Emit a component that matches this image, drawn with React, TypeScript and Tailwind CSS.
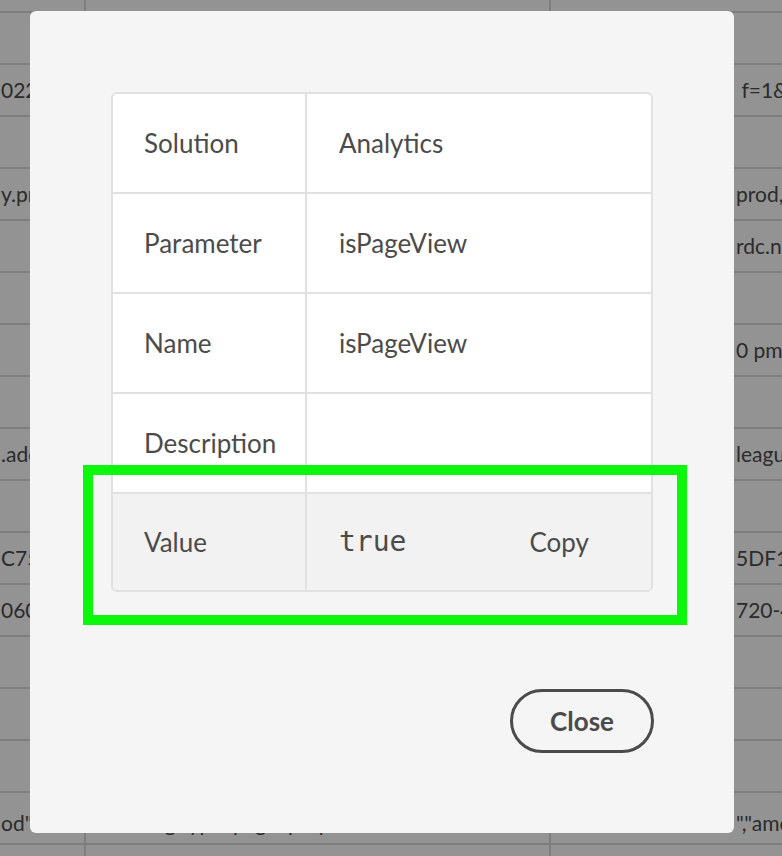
import React from 'react';

// background table rows: [col1, col2, col3]
const bgRows: string[][] = [
  ['ag', 'pa  g                 og', '              p    g'],
  ['', '', ''],
  ['0229', '', ' f=1&t'],
  ['', '', ''],
  ['y.prod', '', 'prod,a'],
  ['', '', 'rdc.ne'],
  ['', '', ''],
  ['', '', '0 pm'],
  ['', '', ''],
  ['.adobe', '', 'leagu'],
  ['', '', ''],
  ['C75A', '', '5DF1C'],
  ['060F', '', '720-4'],
  ['', '', ''],
  ['', '', ''],
  ['', '', ''],
  ['od"', 'String type  page  props', '","amount'],
  ['', '', ''],
];

const details = [
  { label: 'Solution', value: 'Analytics' },
  { label: 'Parameter', value: 'isPageView' },
  { label: 'Name', value: 'isPageView' },
  { label: 'Description', value: '' },
];

export default function App() {
  return (
    <div className="relative h-[856px] w-full overflow-hidden bg-[#939393] font-['Lato',sans-serif]">
      {/* dimmed table behind the dialog */}
      <div className="-mt-[39px] flex flex-col text-[21px] text-[#2b2b2b]">
        {bgRows.map((row, i) => {
          const align = i === 0 ? 'items-end pb-[8px]' : i === 16 ? 'items-end pb-[5px]' : 'items-center';
          return (
            <div key={i} className="grid h-[52px] grid-cols-[86px_465px_1fr] border-b-2 border-[#7e7e7e]">
              <div className={`flex overflow-hidden whitespace-pre border-r-2 border-[#7e7e7e] pl-[1px] ${align}`}>{row[0]}</div>
              <div className={`flex overflow-hidden whitespace-pre border-r-2 border-[#7e7e7e] pl-[36px] ${align}`}>{row[1]}</div>
              <div className={`flex overflow-hidden whitespace-pre pl-[185px] ${align}`}>{row[2]}</div>
            </div>
          );
        })}
      </div>

      {/* dialog */}
      <div className="absolute left-[30px] top-[11px] flex w-[704px] flex-col rounded-md bg-[#f5f5f5] px-[81px] pb-[80px] pt-[81px] text-[26px] text-[#4b4b4b]">
        <div className="overflow-hidden rounded-md border-2 border-[#e1e1e1] bg-white">
          {details.map((d) => (
            <div key={d.label} className="flex h-[100px] border-b-2 border-[#e1e1e1]">
              <div className="flex w-[194px] items-center border-r-2 border-[#e1e1e1] pl-[31px]">{d.label}</div>
              <div className="flex flex-1 items-center pl-[32px]">{d.value}</div>
            </div>
          ))}
          <div className="flex h-[96px] bg-[#f2f2f2]">
            <div className="flex w-[194px] items-center border-r-2 border-[#e1e1e1] pl-[31px]">Value</div>
            <div className="flex flex-1 items-center justify-between pl-[32px] pr-[62px]">
              <span className="font-['DejaVu_Sans_Mono',monospace] text-[28px]">true</span>
              <button className="text-[26px] text-[#4b4b4b]">Copy</button>
            </div>
          </div>
        </div>
        <div className="mt-[97px] flex justify-end">
          <button className="-mr-[1px] h-[64px] w-[144px] rounded-full border-[3px] border-[#4b4b4b] text-[26px] font-bold text-[#4b4b4b]">
            Close
          </button>
        </div>
      </div>

      {/* highlight box */}
      <div className="absolute left-[83px] top-[465px] h-[160px] w-[604px] border-[10px] border-[#0cf70c]" />
    </div>
  );
}
